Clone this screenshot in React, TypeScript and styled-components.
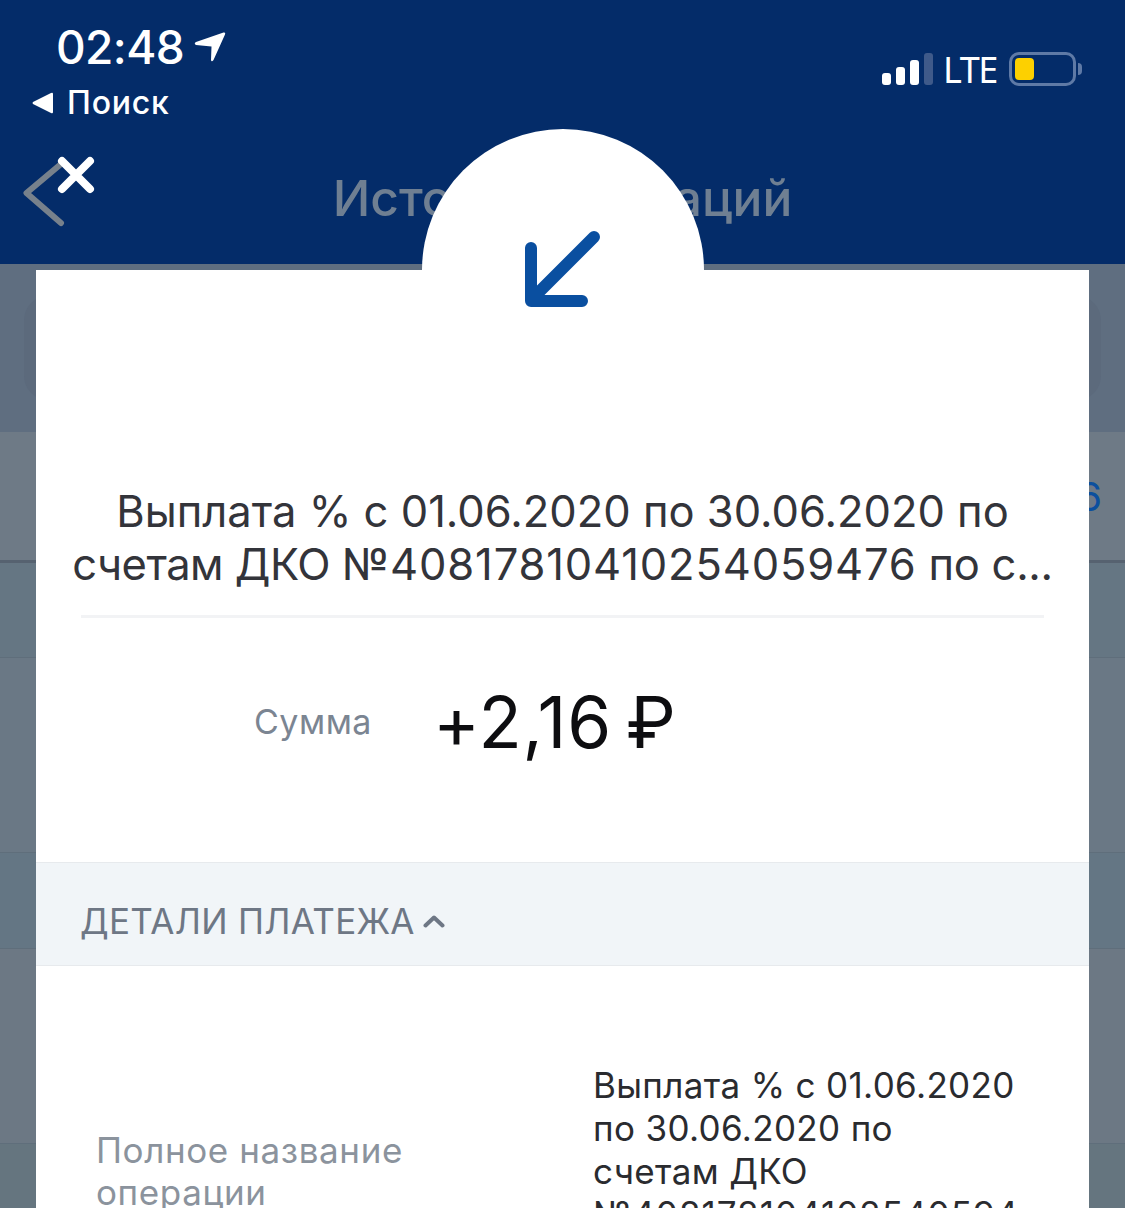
import styled, { createGlobalStyle } from "styled-components";

const GlobalStyle = createGlobalStyle`
  html, body {
    margin: 0;
    padding: 0;
    background: #687784;
  }
  * {
    box-sizing: border-box;
  }
`;

const font = `Inter, "Noto Sans", sans-serif`;

const Screen = styled.div`
  position: relative;
  width: 1125px;
  height: 1208px;
  overflow: hidden;
  font-family: ${font};
  background: #687784;
`;

/* page behind the modal */
const Header = styled.header`
  height: 264px;
  background: #042c69;
  padding: 175px 0 0;
  display: flex;
  justify-content: center;
  color: #6f7f92;
  font-size: 49.7px;
  line-height: 46px;
  font-weight: 500;
`;

const SearchBand = styled.div`
  height: 168px;
  background: #5f6e80;
  padding: 32px 24px;
`;

const SearchField = styled.div`
  height: 104px;
  border-radius: 24px;
  background: #5c6a7c;
`;

const TabsBand = styled.div`
  height: 131px;
  background: #6e7a86;
  border-bottom: 3px solid #566270;
  display: flex;
  justify-content: flex-end;
  align-items: center;
  padding-right: 23px;
  color: #0b4f9e;
  font-size: 40px;
`;

const Row = styled.div<{ $h: number; $bg: string }>`
  height: ${(p) => p.$h}px;
  background: ${(p) => p.$bg};
  border-bottom: 1px solid #5f6e7b;
`;

/* modal */
const Sheet = styled.section`
  position: absolute;
  top: 270px;
  left: 36px;
  width: 1053px;
  background: #fff;
  display: flex;
  flex-direction: column;
`;

const Bump = styled.div`
  position: absolute;
  top: -141px;
  left: 386px;
  width: 282px;
  height: 282px;
  border-radius: 50%;
  background: #fff;
  display: flex;
  justify-content: center;
  padding: 102px 2px 0 0;
`;

const Title = styled.h1`
  position: relative;
  margin: 0 17px;
  padding-top: 215px;
  font-size: 43.5px;
  line-height: 53px;
  font-weight: 400;
  color: #33343a;
  text-align: center;
  white-space: nowrap;
`;

const TitleLine = styled.span<{ $spacing: number }>`
  letter-spacing: ${(p) => p.$spacing}px;
`;

const Divider = styled.div`
  position: relative;
  height: 3px;
  margin: 24px 45px 0;
  background: #f2f3f5;
`;

const AmountRow = styled.div`
  display: flex;
  align-items: center;
  height: 244px;
  padding: 0 0 37px 218px;
`;

const AmountLabel = styled.span`
  width: 184px;
  margin-right: -5px;
  font-size: 34px;
  letter-spacing: 0.5px;
  color: #7b8592;
`;

const AmountValue = styled.span`
  font-size: 71px;
  letter-spacing: 0.8px;
  word-spacing: -7px;
  color: #0d0d10;
`;

const DetailsBar = styled.div`
  height: 104px;
  background: #f1f5f8;
  border-top: 1px solid #e7eaed;
  border-bottom: 1px solid #e7eaed;
  display: flex;
  align-items: center;
  gap: 8px;
  padding: 13px 0 0 44px;
  font-size: 35px;
  letter-spacing: 0.3px;
  color: #6e7785;
`;

const DetailRow = styled.div`
  display: grid;
  grid-template-columns: 497px 428px;
  padding: 98px 0 0 60px;
`;

const DetailLabel = styled.div`
  padding-top: 65px;
  font-size: 35px;
  line-height: 42px;
  letter-spacing: 0.6px;
  color: #8b939d;
`;

const DetailValue = styled.div`
  font-size: 35px;
  line-height: 43px;
  letter-spacing: 0.35px;
  color: #2a2b2f;
  white-space: pre-line;
  overflow-wrap: anywhere;
`;

const AccountNumber = styled.span`
  letter-spacing: 1px;
`;

/* status bar sits above everything */
const StatusBar = styled.div`
  position: absolute;
  top: 0;
  left: 0;
  width: 1125px;
  height: 125px;
  color: #fff;
`;

const Clock = styled.div`
  position: absolute;
  top: 20px;
  left: 56px;
  display: flex;
  align-items: center;
  gap: 9px;
  font-size: 46px;
  line-height: 54px;
  font-weight: 550;
  letter-spacing: -0.6px;
`;

const BackToSearch = styled.div`
  position: absolute;
  top: 84px;
  left: 32px;
  display: flex;
  align-items: center;
  gap: 13px;
  font-size: 32px;
  line-height: 38px;
  font-weight: 500;
  letter-spacing: 0.8px;
`;

const Signal = styled.div`
  position: absolute;
  top: 53px;
  left: 882px;
  display: flex;
  align-items: flex-end;
  gap: 5px;
  height: 32px;
`;

const SignalBar = styled.span<{ $h: number; $off?: boolean }>`
  width: 9px;
  height: ${(p) => p.$h}px;
  border-radius: 3px;
  background: ${(p) => (p.$off ? "#3f5a8a" : "#fff")};
`;

const Lte = styled.div`
  position: absolute;
  top: 50px;
  left: 943px;
  font-family: "Noto Sans", sans-serif;
  font-size: 36px;
  line-height: 40px;
  letter-spacing: -1.5px;
`;

const Battery = styled.div`
  position: absolute;
  top: 52px;
  left: 1009px;
  width: 67px;
  height: 34px;
  border: 3px solid #5f7aa6;
  border-radius: 10px;
  padding: 3px;
`;

const BatteryLevel = styled.div`
  width: 19px;
  height: 22px;
  border-radius: 4px;
  background: #fdd000;
`;

const BatteryCap = styled.div`
  position: absolute;
  top: 63px;
  left: 1078px;
  width: 4px;
  height: 12px;
  border-radius: 0 4px 4px 0;
  background: #5f7aa6;
`;

const BackIcon = styled.svg`
  position: absolute;
  top: 158px;
  left: 20px;
`;

const CloseIcon = styled.svg`
  position: absolute;
  top: 155px;
  left: 56px;
`;

export default function App() {
  return (
    <Screen>
      <GlobalStyle />
      <Header>История операций</Header>
      <SearchBand>
        <SearchField />
      </SearchBand>
      <TabsBand>6</TabsBand>
      <Row $h={95} $bg="#657683" />
      <Row $h={195} $bg="#6a7885" />
      <Row $h={96} $bg="#647684" />
      <Row $h={195} $bg="#6c7884" />
      <Row $h={65} $bg="#65757f" />

      <BackIcon width="48" height="72" viewBox="0 0 48 72" fill="none">
        <path d="M41 6 L6.5 35 L41 65" stroke="#77818c" strokeWidth="6" strokeLinecap="round" strokeLinejoin="round" />
      </BackIcon>

      <StatusBar>
        <Clock>
          02:48
          <svg width="33" height="32" viewBox="0 0 33 32">
            <path d="M30.5 1.5 Q33 1 32 3.5 L20.5 29 Q18.5 31.5 18 29 L18.5 15.5 L3 14 Q0.5 12.5 3 11 Z" fill="#fff" />
          </svg>
        </Clock>
        <BackToSearch>
          <svg width="22" height="22" viewBox="0 0 22 22">
            <path d="M21 2 V20 Q21 22 19 21 L1 12 Q0 11 1 10 L19 1 Q21 0 21 2 Z" fill="#fff" />
          </svg>
          Поиск
        </BackToSearch>
        <Signal>
          <SignalBar $h={12} />
          <SignalBar $h={18} />
          <SignalBar $h={25} />
          <SignalBar $h={32} $off />
        </Signal>
        <Lte>LTE</Lte>
        <Battery>
          <BatteryLevel />
        </Battery>
        <BatteryCap />
      </StatusBar>

      <CloseIcon width="40" height="40" viewBox="0 0 40 40" fill="none">
        <path d="M6 6 L34 34 M34 6 L6 34" stroke="#fff" strokeWidth="8" strokeLinecap="round" />
      </CloseIcon>

      <Sheet>
        <Bump>
          <svg width="78" height="78" viewBox="0 0 78 78" fill="none">
            <path d="M71 6 L8 69 M8 17 V70 H59" stroke="#0a4fa0" strokeWidth="12" strokeLinecap="round" strokeLinejoin="round" />
          </svg>
        </Bump>
        <Title>
          Выплата % с 01.06.2020 по 30.06.2020 по
          <br />
          <TitleLine $spacing={-0.5}>счетам ДКО </TitleLine>
          <TitleLine $spacing={0.85}>№40817810410254059476</TitleLine>
          <TitleLine $spacing={-0.3}> по с...</TitleLine>
        </Title>
        <Divider />
        <AmountRow>
          <AmountLabel>Сумма</AmountLabel>
          <AmountValue>+2,16 ₽</AmountValue>
        </AmountRow>
        <DetailsBar>
          ДЕТАЛИ ПЛАТЕЖА
          <svg width="22" height="14" viewBox="0 0 22 14" fill="none">
            <path d="M2.5 11.5 L11 3.5 L19.5 11.5" stroke="#6e7785" strokeWidth="4" strokeLinecap="round" strokeLinejoin="round" />
          </svg>
        </DetailsBar>
        <DetailRow>
          <DetailLabel>
            Полное название
            <br />
            операции
          </DetailLabel>
          <DetailValue>
            {"Выплата % с 01.06.2020\nпо 30.06.2020 по\nсчетам ДКО\n"}
            <AccountNumber>№40817810410254059476</AccountNumber>
          </DetailValue>
        </DetailRow>
      </Sheet>
    </Screen>
  );
}
